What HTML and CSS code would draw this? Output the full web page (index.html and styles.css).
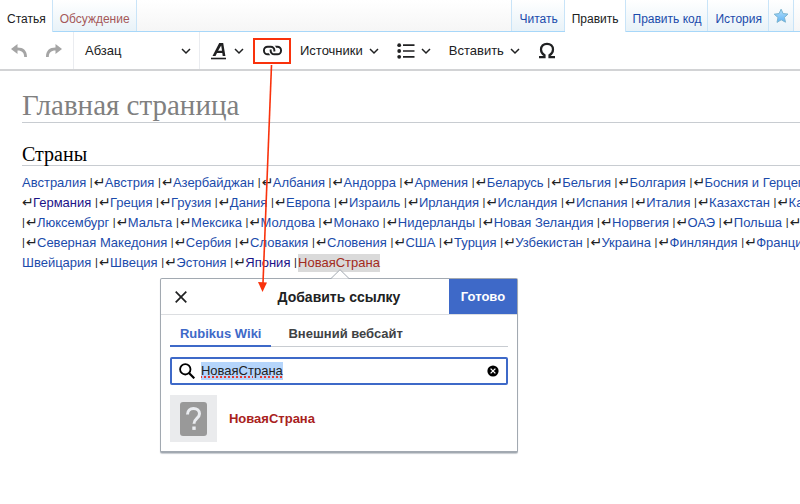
FILE: index.html
```html
<!DOCTYPE html>
<html lang="ru">
<head>
  <meta charset="UTF-8">
  <title>Главная страница</title>
  <link rel="stylesheet" href="styles.css">
</head>
<body>
  <div class="page">
    <nav class="tabs">
      <a class="tab active" href="#">Статья</a>
      <a class="tab new" href="#">Обсуждение</a>
      <span class="tabs-gap"></span>
      <a class="tab" href="#">Читать</a>
      <a class="tab active" href="#">Править</a>
      <a class="tab" href="#">Править код</a>
      <a class="tab" href="#">История</a>
      <a class="tab star" href="#" aria-label="Следить">
        <svg width="16" height="16" viewBox="0 0 16 16"><defs><linearGradient id="sky" x1="0" y1="0" x2="0" y2="1"><stop offset="0" stop-color="#b4e1fb"/><stop offset="1" stop-color="#5fb2f5"/></linearGradient></defs><path d="M8.100 1.200l2 4.400 4.900.5-3.600 3.300 1.100 4.800-4.300-2.400-4.200 2.600 1-4.900L1.200 6.200l4.900-.6z" fill="url(#sky)" stroke="#7cb5d1" stroke-linejoin="round"/></svg>
      </a>
    </nav>

    <div class="toolbar">
      <div class="group history">
        <button class="tool" aria-label="Отменить" disabled><svg width="16" height="16" viewBox="0 0 16 16"><path d="M0 6l6.500-5v3.500C12.500 4.500 16 7.500 16 14h-2.800c0-4.200-2.200-6.500-6.700-6.500V11z" fill="#a5a5a5"/></svg></button>
        <button class="tool" aria-label="Повторить" disabled><svg width="16" height="16" viewBox="0 0 16 16"><path d="M16 6L9.500 1v3.500C3.500 4.500 0 7.500 0 14h2.800c0-4.200 2.200-6.500 6.700-6.500V11z" fill="#a5a5a5"/></svg></button>
      </div>
      <div class="group format">
        <button class="tool wide">Абзац <svg class="chev" width="10" height="10" viewBox="0 0 10 10"><path d="M1 3l4 4 4-4"/></svg></button>
      </div>
      <div class="group tools">
        <button class="tool" aria-label="Стиль текста"><svg width="17" height="18" viewBox="0 0 17 18"><path d="M0 16.500h15" stroke="#202122" stroke-width="1.600"/><path d="M1.500 14L8.200 1h4l2.200 13h-2.700l-.4-3H6L4.500 14zM7.100 8.800H11l-.8-5.400z" fill="#202122"/></svg><svg class="chev" width="10" height="10" viewBox="0 0 10 10"><path d="M1 3l4 4 4-4"/></svg></button>
        <button class="tool link" aria-label="Ссылка">
          <svg width="19" height="19" viewBox="0 0 20 20" fill="#202122"><path d="M4.830 15h2.910a4.900 4.900 0 0 1-1.550-2H5a3 3 0 1 1 0-6h3a3 3 0 0 1 2.820 4h2.100a5 5 0 0 0 .08-.83v-.34A4.830 4.830 0 0 0 8.170 5H4.830A4.830 4.830 0 0 0 0 9.830v.34A4.830 4.830 0 0 0 4.830 15"/><path d="M15.170 5h-2.910a4.900 4.900 0 0 1 1.550 2H15a3 3 0 1 1 0 6h-3a3 3 0 0 1-2.820-4h-2.100a5 5 0 0 0-.08.83v.34A4.830 4.830 0 0 0 11.830 15h3.340A4.830 4.830 0 0 0 20 10.170v-.34A4.830 4.830 0 0 0 15.170 5"/></svg>
          <svg class="arrow" width="20" height="230" viewBox="0 0 20 230"><path d="M13.500 0L5 218" stroke="#f9320c" stroke-width="1.600"/><path d="M0 217l9 .4L4.500 227z" fill="#f9320c"/></svg>
        </button>
        <button class="tool">Источники <svg class="chev" width="10" height="10" viewBox="0 0 10 10"><path d="M1 3l4 4 4-4"/></svg></button>
        <button class="tool" aria-label="Список"><svg width="18" height="16" viewBox="0 0 18 16"><g fill="#202122"><circle cx="2.200" cy="2.200" r="1.900"/><circle cx="2.200" cy="8" r="1.900"/><circle cx="2.200" cy="13.800" r="1.900"/></g><path d="M6 2.200h11.500M6 8h11.500M6 13.800h11.500" stroke="#202122" stroke-width="1.700"/></svg><svg class="chev" width="10" height="10" viewBox="0 0 10 10"><path d="M1 3l4 4 4-4"/></svg></button>
        <button class="tool">Вставить <svg class="chev" width="10" height="10" viewBox="0 0 10 10"><path d="M1 3l4 4 4-4"/></svg></button>
        <button class="tool" aria-label="Специальные символы"><svg width="18" height="17" viewBox="0 0 18 17"><path d="M1 15.200h5.500v-2C4 11.800 3 9.700 3 7.500 3 4.200 5.400 1.800 9 1.800s6 2.400 6 5.700c0 2.200-1 4.300-3.500 5.700v2H17" fill="none" stroke="#202122" stroke-width="2.200"/></svg></button>
      </div>
    </div>

    <main class="content">
      <h1>Главная страница</h1>
      <h2>Страны</h2>
      <div class="countries">
        <div><a href="#">Австралия</a> <i>|</i><b>↵</b><a href="#">Австрия</a> <i>|</i><b>↵</b><a href="#">Азербайджан</a> <i>|</i><b>↵</b><a href="#">Албания</a> <i>|</i><b>↵</b><a href="#">Андорра</a> <i>|</i><b>↵</b><a href="#">Армения</a> <i>|</i><b>↵</b><a href="#">Беларусь</a> <i>|</i><b>↵</b><a href="#">Бельгия</a> <i>|</i><b>↵</b><a href="#">Болгария</a> <i>|</i><b>↵</b><a href="#">Босния и Герцеговина</a></div>
        <div><b>↵</b><a class="visited" href="#">Германия</a> <i>|</i><b>↵</b><a href="#">Греция</a> <i>|</i><b>↵</b><a href="#">Грузия</a> <i>|</i><b>↵</b><a href="#">Дания</a> <i>|</i><b>↵</b><a href="#">Европа</a> <i>|</i><b>↵</b><a href="#">Израиль</a> <i>|</i><b>↵</b><a href="#">Ирландия</a> <i>|</i><b>↵</b><a href="#">Исландия</a> <i>|</i><b>↵</b><a href="#">Испания</a> <i>|</i><b>↵</b><a href="#">Италия</a> <i>|</i><b>↵</b><a href="#">Казахстан</a> <i>|</i><b>↵</b><a href="#">Канада</a></div>
        <div><i>|</i><b>↵</b><a href="#">Люксембург</a> <i>|</i><b>↵</b><a href="#">Мальта</a> <i>|</i><b>↵</b><a href="#">Мексика</a> <i>|</i><b>↵</b><a href="#">Молдова</a> <i>|</i><b>↵</b><a href="#">Монако</a> <i>|</i><b>↵</b><a href="#">Нидерланды</a> <i>|</i><b>↵</b><a href="#">Новая Зеландия</a> <i>|</i><b>↵</b><a href="#">Норвегия</a> <i>|</i><b>↵</b><a href="#">ОАЭ</a> <i>|</i><b>↵</b><a href="#">Польша</a> <i>|</i><b>↵</b></div>
        <div><i>|</i><b>↵</b><a href="#">Северная Македония</a> <i>|</i><b>↵</b><a href="#">Сербия</a> <i>|</i><b>↵</b><a href="#">Словакия</a> <i>|</i><b>↵</b><a href="#">Словения</a> <i>|</i><b>↵</b><a href="#">США</a> <i>|</i><b>↵</b><a href="#">Турция</a> <i>|</i><b>↵</b><a href="#">Узбекистан</a> <i>|</i><b>↵</b><a href="#">Украина</a> <i>|</i><b>↵</b><a href="#">Финляндия</a> <i>|</i><b>↵</b><a href="#">Франция</a></div>
        <div><a href="#">Швейцария</a> <i>|</i><b>↵</b><a href="#">Швеция</a> <i>|</i><b>↵</b><a href="#">Эстония</a> <i>|</i><b>↵</b><a class="visited" href="#">Япония</a> <i>|</i><span class="anchor"><a class="missing" href="#">НоваяСтрана</a>
          <section class="popup">
            <svg class="pointer" width="18" height="10" viewBox="0 0 18 10"><path d="M0 9.500L9 .7l9 8.800" fill="#fff" stroke="#a2a9b1"/></svg>
            <header>
              <button class="close" aria-label="Закрыть"><svg width="12" height="12" viewBox="0 0 12 12"><path d="M.7.7l10.600 10.600M11.300.7L.7 11.300" stroke="#202122" stroke-width="1.700"/></svg></button>
              <h3>Добавить ссылку</h3>
              <button class="done">Готово</button>
            </header>
            <div class="popup-body">
              <div class="switch">
                <button class="selected">Rubikus Wiki</button>
                <button>Внешний вебсайт</button>
              </div>
              <div class="search">
                <svg width="16" height="16" viewBox="0 0 16 16"><circle cx="6.300" cy="6.300" r="5.200" fill="none" stroke="#000" stroke-width="1.800"/><path d="M10 10l5.300 5.300" stroke="#000" stroke-width="2.200"/></svg>
                <input id="query" type="text" value="НоваяСтрана" aria-label="Поиск страницы">
                <button class="clear" aria-label="Очистить"><svg width="12" height="12" viewBox="0 0 12 12"><circle cx="6" cy="6" r="5.600"/><path d="M3.600 3.600l4.800 4.800M8.400 3.600L3.600 8.400" stroke="#fff" stroke-width="1.300"/></svg></button>
              </div>
              <a class="result" href="#">
                <span class="thumb"><svg width="27" height="34" viewBox="0 0 27 34"><rect width="27" height="34" rx="3" fill="#999"/><path d="M7.500 12.500c0-3.800 2.500-6 6-6s6 2.200 6 5.300c0 4.700-5.500 4.700-5.500 10" fill="none" stroke="#eaecf0" stroke-width="3"/><path d="M12.300 24.500h3.400v3.400h-3.400z" fill="#eaecf0"/></svg></span>
                НоваяСтрана
              </a>
            </div>
          </section></span></div>
      </div>
    </main>
  </div>

  <script>
    const query = document.getElementById('query');
    query.focus();
    query.select();
  </script>
</body>
</html>
```
FILE: styles.css
```css
* { box-sizing:border-box; }
body { margin:0; background:#fff; color:#202122; font-family:"Liberation Sans", Arial, sans-serif; font-size:13px; }
a { color:#1b4bab; text-decoration:none; }
button { border:0; padding:0; background:none; font:inherit; color:inherit; cursor:pointer; }
button:disabled { cursor:default; }
svg { display:block; flex:none; }
.page { min-height:100vh; overflow:hidden; }

.tabs { display:flex; height:32px; font-size:12px; background:linear-gradient(#fff, #f6f6f6); border-bottom:1px solid #a7d7f9; }
.tab {
  display:flex; padding:12px 6px 0 7px; line-height:14px; white-space:nowrap;
  background:linear-gradient(#fff, #e8f2f8); border-right:1px solid #c9e4f8;
}
.tab.active { background:#fff; color:#202122; margin-bottom:-1px; }
.tab.new { color:#a55858; }
.tab.star { padding:8px 4px 0; margin-right:6px; }
.tabs-gap { flex:1; border-right:1px solid #c9e4f8; }

.toolbar { display:flex; height:39px; border-bottom:2px solid #d2d3d5; }
.group { display:flex; align-items:center; border-right:1px solid #eaecf0; }
.history { width:74px; justify-content:space-between; padding:0 11px; }
.format { width:126px; padding:0 8px 0 11px; }
.tools { border:0; padding-left:11px; gap:18px; }
.tool { display:flex; align-items:center; gap:6px; height:26px; white-space:nowrap; }
.wide { width:100%; justify-content:space-between; }
.chev path { fill:none; stroke:#202122; stroke-width:1.5; }
.link { position:relative; width:38px; justify-content:center; border:2px solid #f9320c; margin:0 -9px; }
.arrow { position:absolute; left:3px; top:25px; z-index:3; pointer-events:none; }

.content { padding:0 0 0 22px; }
h1, h2 { margin:0; font-family:"Liberation Serif", Georgia, serif; font-weight:400; border-bottom:1px solid #c8ccd1; }
h1 { margin-top:18px; color:#808080; font-size:29px; line-height:33px; }
h2 { margin-top:20px; color:#000; font-size:20px; line-height:22px; }
.countries { margin-top:7px; line-height:20px; white-space:nowrap; }
.countries i { display:inline-block; width:4px; font:11px/12px "Liberation Sans", sans-serif; vertical-align:1px; }
.countries b { display:inline-block; width:11px; font:14px/12px "DejaVu Sans", sans-serif; }
.visited { color:#1a1388; }
.missing { color:#a32a20; }
.anchor { position:relative; display:inline-block; background:#dadada; line-height:18px; }

.popup {
  position:absolute; left:50%; top:24px; width:358px; margin-left:-179px; z-index:2;
  background:#fff; border:1px solid #a2a9b1; border-bottom-width:2px; border-radius:2px;
  box-shadow:0 1px 1px #c8ccd1;
}
.pointer { position:absolute; left:170px; top:-10px; }
.popup header { display:flex; align-items:stretch; height:36px; border-bottom:1px solid #dcdee1; }
.popup h3 { flex:1; margin:0; font-size:14px; line-height:36px; text-align:center; }
.close { display:flex; align-items:center; width:68px; padding-left:14px; }
.done { width:68px; background:#3e69c8; color:#fff; font-weight:700; }
.popup-body { padding:0 9px 9px; }
.switch { display:flex; height:32px; border-bottom:1px solid #c8ccd1; }
.switch button { padding:7px 17px 0; margin-bottom:-1px; font-weight:700; color:#404244; border-bottom:2px solid transparent; }
.switch .selected { padding:7px 10px 0; color:#3e69c8; border-color:#3e69c8; }
.search { display:flex; align-items:center; gap:6px; height:28px; margin-top:10px; padding:0 7px; border:2px solid #3e69c8; border-radius:2px; }
.search input { flex:1; min-width:0; border:0; padding:0; outline:0; font:inherit; color:#202122; }
.search input::selection { background:#b5d5fb; color:#202122; text-decoration:underline dotted #e33a30 2px; }
.result { display:flex; align-items:center; gap:12px; margin-top:10px; font-weight:700; color:#a9221d; }
.thumb { display:flex; align-items:center; justify-content:center; width:47px; height:47px; background:#eaebed; }
```
